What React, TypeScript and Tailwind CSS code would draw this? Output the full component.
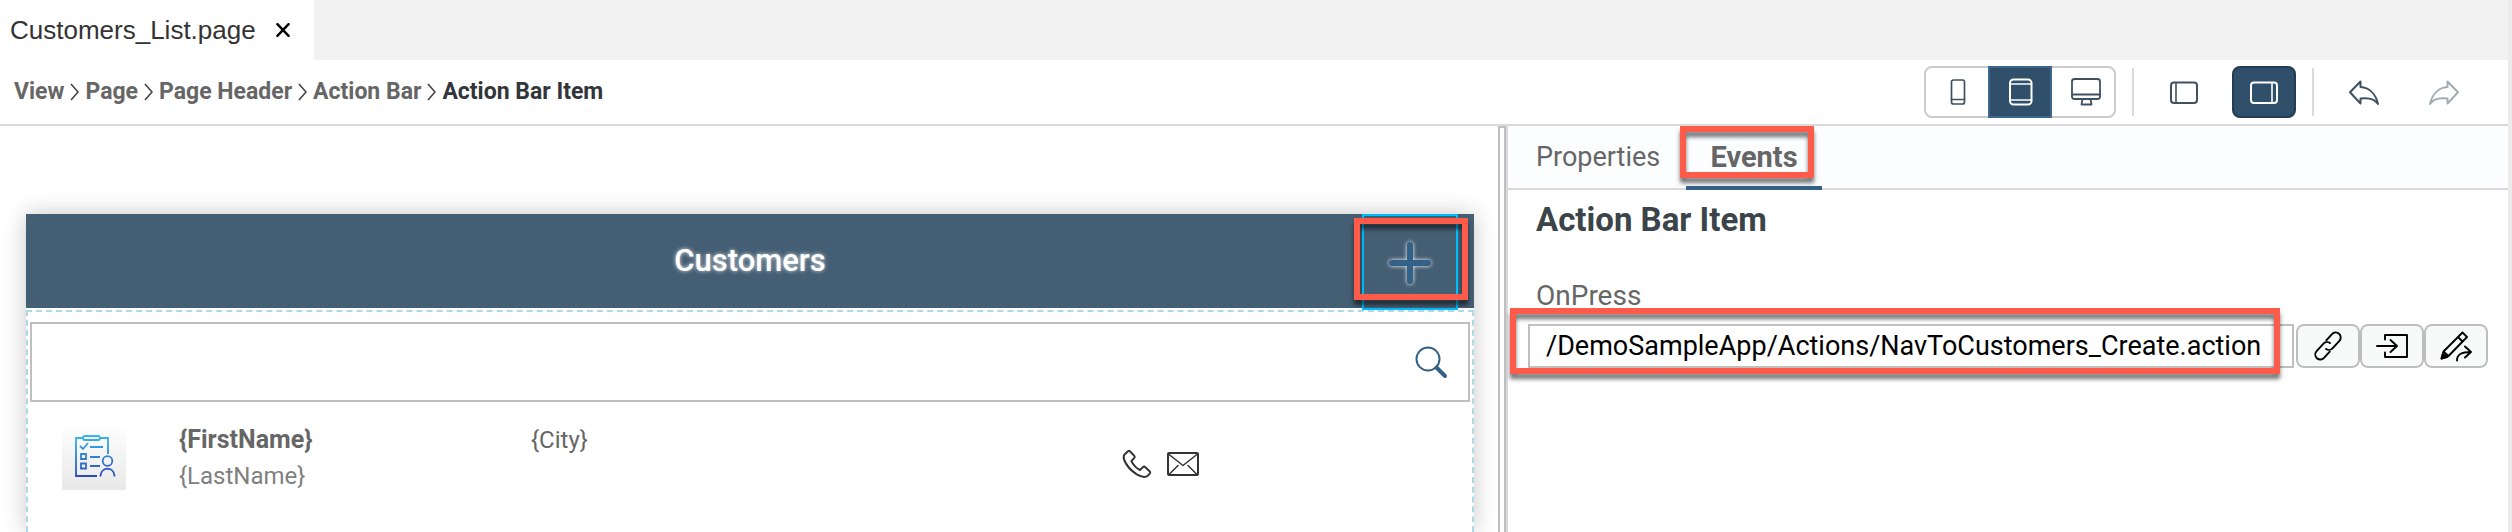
import React from "react";

type IconProps = { className?: string };

const stroke = {
  fill: "none",
  stroke: "currentColor",
  strokeWidth: 2,
  strokeLinejoin: "round" as const,
  strokeLinecap: "round" as const,
};

const CloseIcon = () => (
  <svg width="14" height="14" viewBox="0 0 14 14" {...stroke} strokeWidth={2.4}>
    <path d="M1.4 1.2 12.6 12.8M12.6 1.2 1.4 12.8" />
  </svg>
);
const Chevron = () => (
  <svg width="9" height="18" viewBox="0 0 9 18" fill="none" stroke="#444" strokeWidth={1.6} aria-hidden="true">
    <path d="M1 1 8 9 1 17" />
  </svg>
);
const PhoneDeviceIcon = () => (
  <svg width="32" height="32" viewBox="0 0 32 32" {...stroke} strokeWidth={1.7}>
    <rect x="9.500" y="4" width="13" height="24" rx="2" />
    <path d="M9.500 23.5h13" />
  </svg>
);
const TabletIcon = () => (
  <svg width="32" height="32" viewBox="0 0 32 32" {...stroke}>
    <rect x="5" y="3.5" width="21.5" height="25" rx="3.5" />
    <path d="M5 8h21.5M5 24h21.5" strokeWidth={1.6} />
  </svg>
);
const DesktopIcon = () => (
  <svg width="32" height="32" viewBox="0 0 32 32" {...stroke} strokeWidth={1.8}>
    <rect x="2" y="3" width="28" height="20" rx="2.5" />
    <path d="M2 18.5h28M12.5 23l-1 5.5h10l-1-5.5" />
  </svg>
);
const PanelIcon = ({ right }: { right?: boolean }) => (
  <svg width="32" height="32" viewBox="0 0 32 32" {...stroke}>
    <rect x="3" y="6.500" width="26" height="20.500" rx="3" />
    <path d={right ? "M24 7v20" : "M8 7v20"} strokeWidth={1.6} />
  </svg>
);
const UndoIcon = ({ className }: IconProps) => (
  <svg width="32" height="32" viewBox="0 0 32 32" {...stroke} className={className}>
    <path d="M2 16.3 12.5 5.500v5.600c8.500.6 15.200 6.500 17.500 16.900-3.600-5.400-10-6.400-17.500-5.400V27.500Z" />
  </svg>
);
const PlusIcon = () => (
  <svg width="50" height="50" viewBox="0 0 50 50" className="drop-shadow-[0_0_2px_#ffffff]">
    <path d="M25 8v36M7 26h36" stroke="#346187" strokeWidth="6" strokeLinecap="round" fill="none" />
  </svg>
);
const SearchIcon = () => (
  <svg width="34" height="34" viewBox="0 0 34 34" fill="none" stroke="#346187" strokeLinecap="round">
    <circle cx="14" cy="14" r="11.5" strokeWidth="2" />
    <path d="M22.500 22.500 31 31" strokeWidth="4" />
  </svg>
);
const PhoneIcon = () => (
  <svg width="32" height="32" viewBox="0 0 32 32" {...stroke}>
    <path d="M3.500 6.500 7 3.200c.6-.5 1.300-.5 1.900 0l4.400 4.700c.6.700.6 1.300 0 2l-2.900 3.200c2 4 4.800 6.900 8.600 8.900l3-2.900c.7-.6 1.400-.6 2.100 0l4.700 4.300c.6.700.6 1.300.1 2l-2 2.300c-2.500 2-6.700 1.300-11.100-1.300C10 22.700 5.500 17.600 3.200 12c-.8-2.300-.7-4.100.3-5.500Z" />
  </svg>
);
const MailIcon = () => (
  <svg width="32" height="32" viewBox="0 0 32 32" {...stroke}>
    <rect x="1" y="5" width="30" height="22" rx="1" />
    <path d="M1.500 6 16 17.500 30.500 6M2 26.500l9-9M30 26.500l-9-9" strokeWidth={1.5} />
  </svg>
);
const LinkIcon = () => (
  <svg width="32" height="32" viewBox="0 0 32 32" {...stroke} strokeWidth={1.9}>
    <g transform="rotate(-48 16 16)">
      <path d="M19 11h8.500a5 5 0 0 1 0 10H17.500a5 5 0 0 1-5-4.500" />
      <path d="M13 21H4.500a5 5 0 0 1 0-10h10a5 5 0 0 1 5 4.500" />
    </g>
  </svg>
);
const EnterIcon = () => (
  <svg width="32" height="32" viewBox="0 0 32 32" {...stroke} strokeWidth={1.9}>
    <path d="M9 9.500V5h22v22H9v-4.500M1 16h20M14.500 10 21 16l-6.500 6" />
  </svg>
);
const PencilArrowIcon = () => (
  <svg width="32" height="32" viewBox="0 0 32 32" {...stroke} strokeWidth={1.9}>
    <path d="M1.500 28.500 3.500 21.500 22.500 2.500l4.500 4.500L8.500 26ZM18 7l4.500 4.500M3.500 21.500l5 4.500" />
    <path d="M1.500 28.500 3 23.500l4 3.500Z" fill="currentColor" />
    <path d="M17 30.500c0-6 4-8.500 14-8.500M25 16.500l6 5.500-6 5.500" />
  </svg>
);
const TaskListIcon = () => (
  <svg width="64" height="64" viewBox="0 0 64 64" fill="none" stroke="url(#taskStroke)" strokeWidth="1.800">
    <defs>
      <linearGradient id="taskStroke" gradientUnits="userSpaceOnUse" x1="0" y1="10" x2="0" y2="54">
        <stop offset="0" stopColor="#35b8ee" />
        <stop offset="1" stopColor="#2c40b8" />
      </linearGradient>
    </defs>
    <path d="M21 12h-7v38h21M38 12h8v16" />
    <rect x="21" y="10" width="17" height="4" rx="2" />
    <path d="M18 20l3 3 5-6M28 21h13M28 31h10M28 40h10" />
    <path d="M19 28h5v5h-5ZM19 37.500h5v5h-5Z" />
    <circle cx="45.500" cy="35" r="4.800" />
    <path d="M38.500 50.500v-1c1-9 13-9 14 0v1" />
  </svg>
);

const crumbs = ["View", "Page", "Page Header", "Action Bar"];

/* Red callout frame laid over the control it points at. */
const Callout = ({ className }: { className: string }) => (
  <span
    aria-hidden="true"
    className={`pointer-events-none absolute z-10 border-[6px] border-[#ff5b4b] drop-shadow-[0_5px_2px_rgba(0,0,0,0.55)] ${className}`}
  />
);

function Toolbar() {
  return (
    <div className="flex h-[66px] items-center justify-between border-b-2 border-[#d9d9de] bg-white pr-8 pl-3.5">
      <nav aria-label="Breadcrumb" className="flex items-center gap-1.5 text-[23px] leading-8 font-bold text-[#666]">
        {crumbs.map((c) => (
          <React.Fragment key={c}>
            <a href="#">{c}</a>
            <Chevron />
          </React.Fragment>
        ))}
        <span className="text-[#32363a]">Action Bar Item</span>
      </nav>
      <div className="flex items-center gap-4 text-[#3f5161]">
        <div className="flex h-[52px]">
          <button aria-label="Phone" className="flex w-16 items-center justify-center rounded-l-lg border-2 border-r-0 border-[#ccc] pl-0.5">
            <PhoneDeviceIcon />
          </button>
          <button aria-label="Tablet" className="flex w-16 items-center justify-center border-2 border-[#3d688c] bg-[#2f4f6a] pl-0.5 text-white">
            <TabletIcon />
          </button>
          <button aria-label="Desktop" className="flex w-16 items-center justify-center rounded-r-lg border-2 border-l-0 border-[#ccc] pl-1.5">
            <DesktopIcon />
          </button>
        </div>
        <span className="mr-0.5 h-12 w-0.5 bg-[#d9d9de]" />
        <button aria-label="Toggle left panel" className="flex h-[52px] w-16 items-center justify-center">
          <PanelIcon />
        </button>
        <button aria-label="Toggle right panel" className="flex h-[52px] w-16 items-center justify-center rounded-lg border-2 border-[#243c54] bg-[#2f4f6a] text-white">
          <PanelIcon right />
        </button>
        <span className="mr-0.5 h-12 w-0.5 bg-[#d9d9de]" />
        <button aria-label="Undo" className="flex h-[52px] w-16 items-center justify-center">
          <UndoIcon />
        </button>
        <button aria-label="Redo" className="flex h-[52px] w-16 items-center justify-center text-[#a3abb3]">
          <UndoIcon className="-scale-x-100" />
        </button>
      </div>
    </div>
  );
}

function Preview() {
  return (
    <section className="flex min-w-0 flex-1 flex-col overflow-hidden px-6 pt-[88px] pl-[26px]">
      <div className="flex flex-1 flex-col shadow-[0_0_22px_rgba(0,0,0,0.22)]">
        <header className="grid h-[94px] grid-cols-[1fr_auto_1fr] items-center bg-[#445e73]">
          <h1 className="col-start-2 text-[31px] leading-10 font-medium text-white [text-shadow:0_0_4px_rgba(255,255,255,0.8)]">
            Customers
          </h1>
          <div className="relative mr-4 h-[94px] justify-self-end">
            <button aria-label="Add" className="flex h-24 w-24 items-center justify-center border-2 border-[#00bfff]">
              <PlusIcon />
            </button>
            <Callout className="top-1 -right-2.5 bottom-2 -left-2" />
          </div>
        </header>
        <div className="mt-0.5 flex-1 border-2 border-b-0 border-dashed border-[#add8e6] px-0.5 pt-2.5">
          <label className="flex h-20 items-center border-2 border-[#bfbfbf] pr-5 pl-4">
            <input aria-label="Search" className="h-full min-w-0 flex-1 text-2xl outline-none" />
            <SearchIcon />
          </label>
          <div className="flex items-start pt-6 pl-8 text-2xl leading-9 text-[#666]">
            <span className="h-16 w-16 bg-linear-to-b from-[#fefefe] to-[#e8e8e8]">
              <TaskListIcon />
            </span>
            <div className="-mt-1 ml-[53px] w-[352px]">
              <div className="text-[25px] leading-9 font-bold">{"{FirstName}"}</div>
              <div className="text-[#808080]">{"{LastName}"}</div>
            </div>
            <div className="-mt-1 w-[590px]">{"{City}"}</div>
            <div className="mt-[22px] flex gap-3.5 text-[#333]">
              <button aria-label="Call"><PhoneIcon /></button>
              <button aria-label="Mail"><MailIcon /></button>
            </div>
          </div>
        </div>
      </div>
    </section>
  );
}

function Inspector() {
  const tool = "flex h-11 w-16 items-center justify-center rounded-lg border-2 border-[#bfbfbf] bg-[#f8fafa]";
  return (
    <aside className="w-[1002px] shrink-0 border-l-2 border-[#d9d9de]">
      <div role="tablist" className="flex h-16 border-b-2 border-[#d9d9de] bg-[#fcfdff] pl-7 text-[27px] leading-10 text-[#666]">
        <button role="tab" aria-selected="false" className="flex w-[150px] items-center">
          Properties
        </button>
        <button role="tab" aria-selected="true" className="relative -mb-0.5 flex w-[136px] justify-center border-b-4 border-[#346187] pt-[11px] text-[29px] leading-10 font-bold">
          Events
          <Callout className="top-0 right-2 h-[52px] -left-1.5" />
        </button>
      </div>
      <div className="pr-5 pl-5">
        <h2 className="pt-2.5 pl-2 text-[33px] leading-10 font-bold text-[#3b4449]">Action Bar Item</h2>
        <label htmlFor="onpress" className="mt-9 block pl-2 text-[28px] leading-10 text-[#666]">
          OnPress
        </label>
        <div className="relative mt-2 flex">
          <input
            id="onpress"
            defaultValue="/DemoSampleApp/Actions/NavToCustomers_Create.action"
            className="mr-0.5 h-11 min-w-0 flex-1 border-2 border-[#bfbfbf] px-4 text-[27px] text-black outline-none"
          />
          <button aria-label="Bind to object" className={tool}><LinkIcon /></button>
          <button aria-label="Open action" className={tool}><EnterIcon /></button>
          <button aria-label="Create action" className={tool}><PencilArrowIcon /></button>
          <Callout className="-top-4 right-52 -bottom-1.5 -left-[18px]" />
        </div>
      </div>
    </aside>
  );
}

export default function App() {
  return (
    <div className="flex min-h-screen bg-[#ececec] pr-1 font-[Roboto,'Liberation_Sans',sans-serif]">
      <div className="flex min-w-0 flex-1 flex-col bg-white">
        <div className="flex h-[60px] bg-[#f2f2f2]">
          <div className="flex w-[314px] items-center gap-5 bg-white pl-2.5 font-['Liberation_Sans',Arial,sans-serif] text-[26px] leading-8 text-[#333]">
            Customers_List.page
            <button aria-label="Close" className="text-black"><CloseIcon /></button>
          </div>
        </div>
        <Toolbar />
        <main className="flex flex-1">
          <Preview />
          <div className="w-2 border-2 border-b-0 border-[#bfbfbf] bg-white" />
          <Inspector />
        </main>
      </div>
    </div>
  );
}
